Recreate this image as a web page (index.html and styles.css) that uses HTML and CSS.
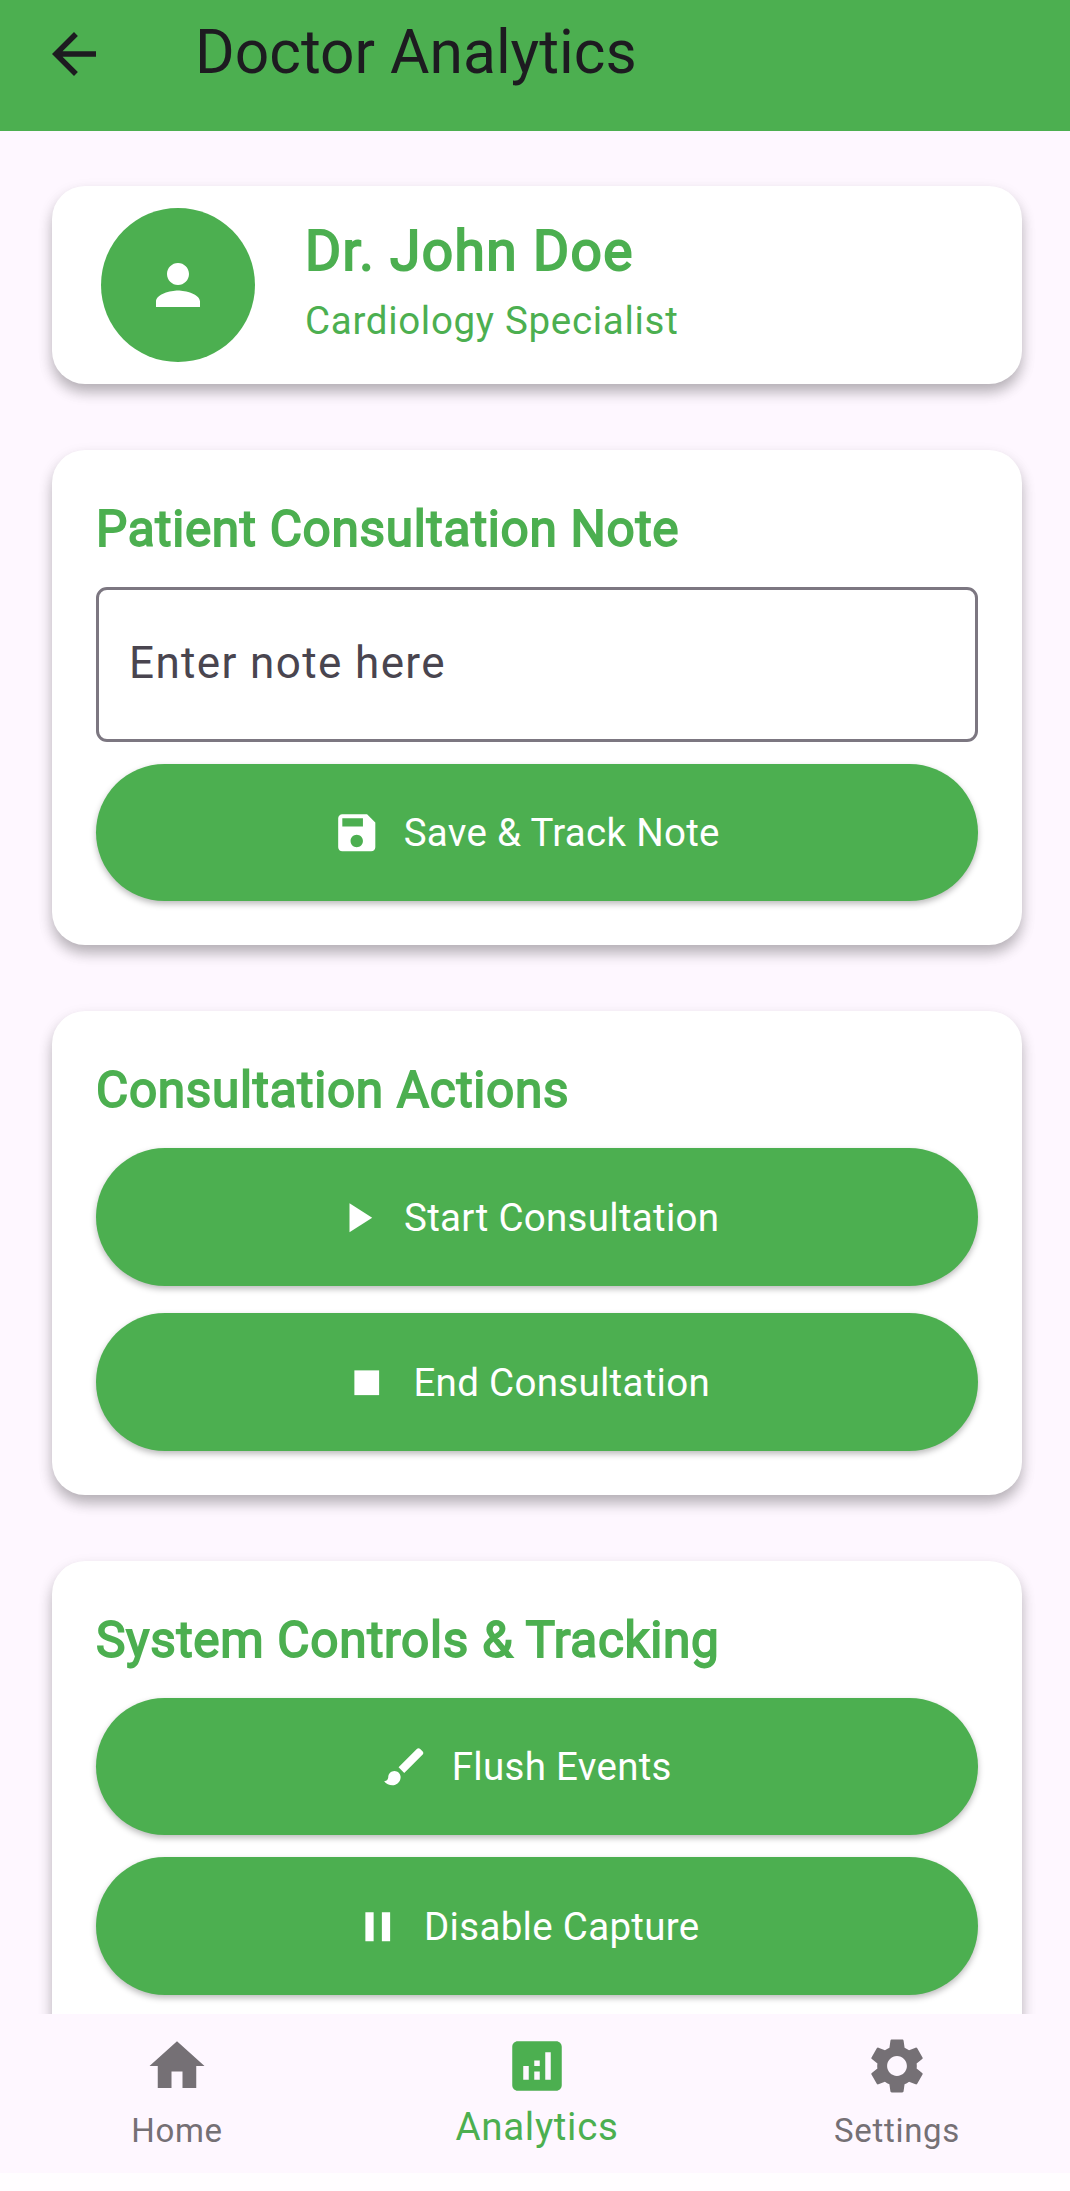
FILE: index.html
```html
<!DOCTYPE html>
<html lang="en">
<head>
<meta charset="utf-8">
<title>Doctor Analytics</title>
<link rel="stylesheet" href="styles.css">
</head>
<body>
<div class="app">
  <header class="app-bar">
    <svg class="back" viewBox="0 0 24 24"><path d="M20 11H7.83l5.59-5.59L12 4l-8 8 8 8 1.41-1.41L7.83 13H20v-2z"/></svg>
    <h1 class="app-title">Doctor Analytics</h1>
  </header>

  <main class="content">
    <section class="card profile">
      <div class="avatar">
        <svg class="icon-lg" viewBox="0 0 24 24"><path d="M12 12c2.21 0 4-1.79 4-4s-1.79-4-4-4-4 1.79-4 4 1.79 4 4 4zm0 2c-2.67 0-8 1.34-8 4v2h16v-2c0-2.66-5.33-4-8-4z"/></svg>
      </div>
      <div class="profile-text">
        <div class="name">Dr. John Doe</div>
        <div class="role">Cardiology Specialist</div>
      </div>
    </section>

    <section class="card panel">
      <h2 class="panel-title">Patient Consultation Note</h2>
      <div class="field">Enter note here</div>
      <button class="btn">
        <svg class="icon" viewBox="0 0 24 24"><path d="M17 3H5c-1.11 0-2 .9-2 2v14c0 1.1.89 2 2 2h14c1.1 0 2-.9 2-2V7l-4-4zm-5 16c-1.66 0-3-1.34-3-3s1.34-3 3-3 3 1.34 3 3-1.34 3-3 3zm3-10H5V5h10v4z"/></svg>
        <span>Save &amp; Track Note</span>
      </button>
    </section>

    <section class="card panel panel-loose">
      <h2 class="panel-title">Consultation Actions</h2>
      <button class="btn">
        <svg class="icon" viewBox="0 0 24 24"><path d="M8 5v14l11-7z"/></svg>
        <span>Start Consultation</span>
      </button>
      <button class="btn">
        <svg class="icon" viewBox="0 0 24 24"><path d="M6 6h12v12H6z"/></svg>
        <span>End Consultation</span>
      </button>
    </section>

    <section class="card panel panel-last">
      <h2 class="panel-title">System Controls &amp; Tracking</h2>
      <button class="btn">
        <svg class="icon" viewBox="0 0 24 24"><path d="M7 14c-1.66 0-3 1.34-3 3 0 1.31-1.16 2-2 2 .92 1.22 2.49 2 4 2 2.21 0 4-1.79 4-4 0-1.66-1.34-3-3-3zm13.71-9.37l-1.34-1.34c-.39-.39-1.02-.39-1.41 0L9 12.25 11.75 15l8.96-8.96c.39-.39.39-1.02 0-1.41z"/></svg>
        <span>Flush Events</span>
      </button>
      <button class="btn">
        <svg class="icon" viewBox="0 0 24 24"><path d="M6 19h4V5H6v14zm8-14v14h4V5h-4z"/></svg>
        <span>Disable Capture</span>
      </button>
    </section>
  </main>

  <nav class="nav">
    <a class="nav-item">
      <svg class="icon-lg" viewBox="0 0 24 24"><path d="M10 20v-6h4v6h5v-8h3L12 3 2 12h3v8z"/></svg>
      <span>Home</span>
    </a>
    <a class="nav-item nav-active">
      <svg class="icon-lg" viewBox="0 0 24 24"><path d="M19 3H5c-1.1 0-2 .9-2 2v14c0 1.1.9 2 2 2h14c1.1 0 2-.9 2-2V5c0-1.1-.9-2-2-2zM9 17H7v-5h2v5zm4 0h-2v-3h2v3zm0-5h-2v-2h2v2zm4 5h-2V7h2v10z"/></svg>
      <span>Analytics</span>
    </a>
    <a class="nav-item">
      <svg class="icon-lg" viewBox="0 0 24 24"><path d="M19.14 12.94c.04-.3.06-.61.06-.94 0-.32-.02-.64-.07-.94l2.03-1.58c.18-.14.23-.41.12-.61l-1.92-3.32c-.12-.22-.37-.29-.59-.22l-2.39.96c-.5-.38-1.03-.7-1.62-.94l-.36-2.54c-.04-.24-.24-.41-.48-.41h-3.84c-.24 0-.43.17-.47.41l-.36 2.54c-.59.24-1.13.57-1.62.94l-2.39-.96c-.22-.08-.47 0-.59.22L2.74 8.87c-.12.21-.08.47.12.61l2.03 1.58c-.05.3-.09.63-.09.94s.02.64.07.94l-2.03 1.58c-.18.14-.23.41-.12.61l1.92 3.32c.12.22.37.29.59.22l2.39-.96c.5.38 1.03.7 1.62.94l.36 2.54c.05.24.24.41.48.41h3.84c.24 0 .44-.17.47-.41l.36-2.54c.59-.24 1.13-.56 1.62-.94l2.39.96c.22.08.47 0 .59-.22l1.92-3.32c.12-.22.07-.47-.12-.61l-2.01-1.58zM12 15.6c-1.98 0-3.6-1.62-3.6-3.6s1.62-3.6 3.6-3.6 3.6 1.62 3.6 3.6-1.62 3.6-3.6 3.6z"/></svg>
      <span>Settings</span>
    </a>
  </nav>
</div>
</body>
</html>
```

FILE: styles.css
```css
* {
  box-sizing: border-box;
}

:root {
  --green: #4caf50;
  --surface: #fef7ff;
  --grey: #757075;
}

body {
  margin: 0;
  background: #fffdff;
  font-family: Roboto, "Liberation Sans", sans-serif;
}

svg {
  display: block;
  flex: none;
  fill: currentColor;
}

h1,
h2 {
  margin: 0;
  font-weight: 400;
}

.app {
  display: flex;
  flex-direction: column;
  height: 2191px;
  overflow: hidden;
}

.app-bar {
  flex: none;
  display: flex;
  gap: 88px;
  height: 131px;
  padding: 21px 0 0 41px;
  background: var(--green);
  color: #1d1b20;
}

.back {
  width: 66px;
  height: 66px;
}

.app-title {
  height: 66px;
  font-size: 60.5px;
  line-height: 63px;
}

.content {
  flex: 1;
  min-height: 0;
  display: flex;
  flex-direction: column;
  gap: 66px;
  padding: 55px 48px 0 52px;
  overflow: hidden;
  background: var(--surface);
}

.card {
  flex: none;
  border-radius: 33px;
  background: #fff;
  box-shadow: 0 9px 14px -1px rgba(0, 0, 0, 0.22), 0 6px 16px rgba(0, 0, 0, 0.11);
}

.profile {
  display: flex;
  gap: 50px;
  height: 198px;
  padding: 22px 49px;
}

.avatar {
  display: grid;
  place-items: center;
  width: 154px;
  height: 154px;
  border-radius: 50%;
  background: var(--green);
  color: #fff;
}

.profile-text {
  display: flex;
  flex-direction: column;
  gap: 9px;
  padding-top: 9.5px;
  color: var(--green);
}

.name {
  font-size: 55px;
  line-height: 66px;
  letter-spacing: 1.375px;
  -webkit-text-stroke: 2px currentColor;
}

.role {
  font-size: 38.5px;
  line-height: 55px;
  letter-spacing: 0.69px;
}

.panel {
  display: flex;
  flex-direction: column;
  gap: 22px;
  padding: 46px 44px 44px;
}

.panel-loose {
  gap: 27.5px;
}

/* the last panel runs on below the navigation bar */
.panel-last {
  padding-bottom: 120px;
}

.panel-title {
  height: 69px;
  color: var(--green);
  font-size: 49.5px;
  line-height: 66px;
  letter-spacing: 0.69px;
  white-space: nowrap;
  -webkit-text-stroke: 1.8px currentColor;
}

.panel-loose .panel-title {
  height: 63.5px;
}

.field {
  height: 154.5px;
  padding-left: 30px;
  border: 3px solid #7c7781;
  border-radius: 11px;
  color: #49454f;
  font-size: 44px;
  line-height: 147px;
  letter-spacing: 1.375px;
}

.btn {
  display: flex;
  align-items: center;
  justify-content: center;
  gap: 22px;
  height: 137.5px;
  padding: 1px 66px 0 44px;
  border: 0;
  border-radius: 69px;
  background: var(--green);
  box-shadow: 0 3px 6px rgba(0, 0, 0, 0.27);
  color: #fff;
  font-family: inherit;
  font-size: 38.5px;
  letter-spacing: 0.3px;
}

.icon {
  width: 49.5px;
  height: 49.5px;
}

.icon-lg {
  width: 66px;
  height: 66px;
}

.nav {
  flex: none;
  display: grid;
  grid-template-columns: repeat(3, 360px);
  justify-content: center;
  height: 159px;
  margin: 0 0 18.5px;
  /* shifts the three equal columns slightly right of centre */
  padding: 19.5px 0 0 4px;
  overflow: hidden;
  background: var(--surface);
}

.nav-item {
  display: flex;
  flex-direction: column;
  align-items: center;
  gap: 11px;
  color: var(--grey);
  font-size: 33px;
  line-height: 41px;
  letter-spacing: 0.69px;
}

.nav-active {
  gap: 7px;
  color: var(--green);
  font-size: 38.5px;
}
```
